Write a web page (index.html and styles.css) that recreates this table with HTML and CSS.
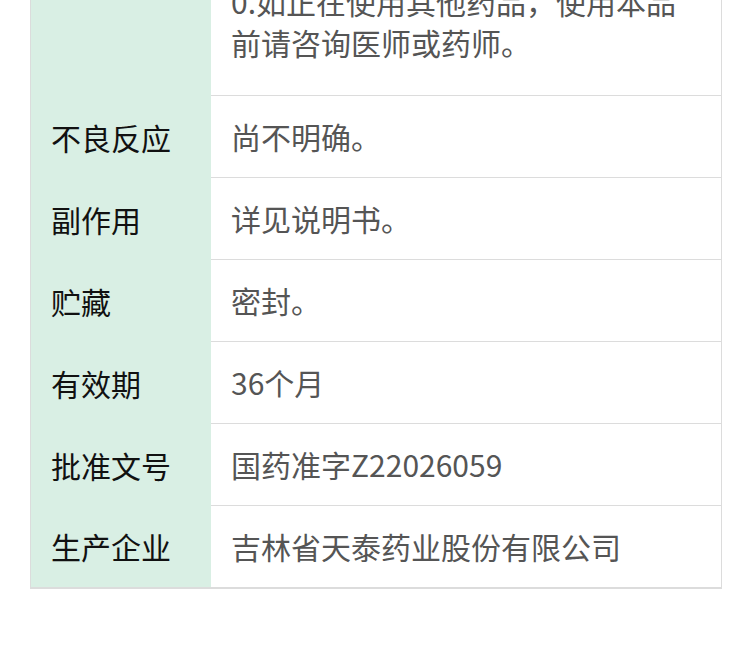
FILE: index.html
```html
<!DOCTYPE html>
<html lang="zh-CN">
  <head>
    <meta charset="UTF-8" />
    <meta name="viewport" content="width=device-width, initial-scale=1.0" />
    <title>药品说明书</title>
    <link rel="stylesheet" href="styles.css">
  </head>
  <body>
    <div class="spec">
      <table class="spec-table">
        <!-- Tail of the previous row (page is scrolled) -->
        <tr>
          <td class="label"></td>
          <td class="value value-long">
            0.如正在使用其他药品，使用本品<br />
            前请咨询医师或药师。
          </td>
        </tr>
        <tr>
          <td class="label">不良反应</td>
          <td class="value">尚不明确。</td>
        </tr>
        <tr>
          <td class="label">副作用</td>
          <td class="value">详见说明书。</td>
        </tr>
        <tr>
          <td class="label">贮藏</td>
          <td class="value">密封。</td>
        </tr>
        <tr>
          <td class="label">有效期</td>
          <td class="value">36个月</td>
        </tr>
        <tr>
          <td class="label">批准文号</td>
          <td class="value">国药准字Z22026059</td>
        </tr>
        <tr>
          <td class="label">生产企业</td>
          <td class="value last">吉林省天泰药业股份有限公司</td>
        </tr>
      </table>
    </div>
  </body>
</html>
```

FILE: styles.css
```css
/* Global */
body {
  margin: 0;
  padding: 0;
  background-color: #fff;
  font-family: "Noto Sans CJK SC", "Noto Sans", sans-serif;
  overflow: hidden;
}

/* Page is scrolled: top row only partly visible */
.spec {
  margin-top: -39px;
  padding: 0 28px 0 30px;
}

.spec-table {
  width: 692px;
  border-collapse: separate;
  border-spacing: 0;
  border-left: 1px solid #dcdcdc;
  border-right: 1px solid #dcdcdc;
  border-bottom: 2px solid #dcdcdc;
}

.spec-table td {
  font-size: 30px;
  line-height: 41px;
  padding: 20px;
  vertical-align: middle;
}

.label {
  width: 140px;
  background-color: #d9efe4;
  color: #111;
}

.value {
  color: #555;
  border-bottom: 1px solid #dcdcdc;
}

.value-long {
  padding-bottom: 32px !important;
}

.value.last {
  border-bottom: none;
}
```
